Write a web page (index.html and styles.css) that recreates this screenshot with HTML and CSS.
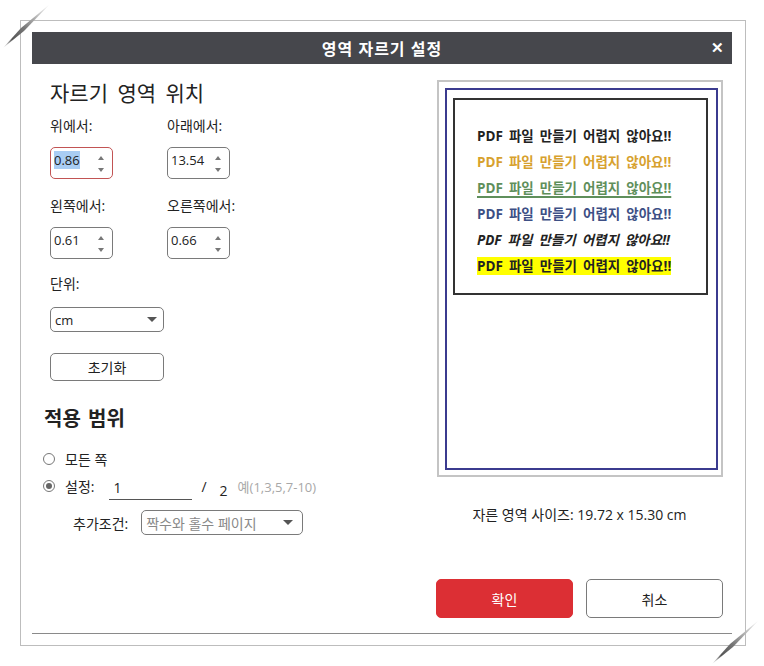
FILE: index.html
```html
<!DOCTYPE html>
<html lang="ko">
<head>
    <meta charset="UTF-8">
    <meta name="viewport" content="width=device-width, initial-scale=1.0">
    <title>영역 자르기 설정</title>
    <link rel="stylesheet" href="styles.css">
</head>
<body>

    <!-- 대화상자 바깥 틀 -->
    <div class="frame">
        <div class="dialog">
            <div class="titlebar">
                <span class="title">영역 자르기 설정</span>
                <span class="close">&#x2715;</span>
            </div>

            <div class="content">
                <!-- 왼쪽: 설정 -->
                <div class="left">
                    <h2 class="heading">자르기 영역 위치</h2>

                    <div class="fields">
                        <div class="field">
                            <div class="label">위에서:</div>
                            <div class="spin active"><span class="value"><span class="selected">0.86</span></span><span class="arrows"><i class="up"></i><i class="down"></i></span></div>
                        </div>
                        <div class="field">
                            <div class="label">아래에서:</div>
                            <div class="spin"><span class="value">13.54</span><span class="arrows"><i class="up"></i><i class="down"></i></span></div>
                        </div>
                        <div class="field">
                            <div class="label">왼쪽에서:</div>
                            <div class="spin"><span class="value">0.61</span><span class="arrows"><i class="up"></i><i class="down"></i></span></div>
                        </div>
                        <div class="field">
                            <div class="label">오른쪽에서:</div>
                            <div class="spin"><span class="value">0.66</span><span class="arrows"><i class="up"></i><i class="down"></i></span></div>
                        </div>
                    </div>

                    <div class="label unit-label">단위:</div>
                    <div class="select unit"><span>cm</span><i class="caret"></i></div>

                    <button class="reset">초기화</button>

                    <h2 class="heading bold">적용 범위</h2>

                    <div class="radio-row">
                        <span class="radio"></span>
                        <span>모든 쪽</span>
                    </div>
                    <div class="radio-row">
                        <span class="radio checked"></span>
                        <span>설정:</span>
                        <span class="page-input">1</span>
                        <span class="slash">/</span>
                        <span class="total">2</span>
                        <span class="hint">예(1,3,5,7-10)</span>
                    </div>
                    <div class="cond-row">
                        <span>추가조건:</span>
                        <div class="select cond"><span>짝수와 홀수 페이지</span><i class="caret"></i></div>
                    </div>
                </div>

                <!-- 오른쪽: 미리보기 -->
                <div class="right">
                    <div class="preview">
                        <div class="page">
                            <div class="crop">
                                <p class="line black">PDF 파일 만들기 어렵지 않아요!!</p>
                                <p class="line gold">PDF 파일 만들기 어렵지 않아요!!</p>
                                <p class="line green">PDF 파일 만들기 어렵지 않아요!!</p>
                                <p class="line blue">PDF 파일 만들기 어렵지 않아요!!</p>
                                <p class="line italic">PDF 파일 만들기 어렵지 않아요!!</p>
                                <p class="line"><span class="mark">PDF 파일 만들기 어렵지 않아요!!</span></p>
                            </div>
                        </div>
                    </div>

                    <div class="size">자른 영역 사이즈: 19.72 x 15.30 cm</div>

                    <div class="buttons">
                        <button class="btn ok">확인</button>
                        <button class="btn cancel">취소</button>
                    </div>
                </div>
            </div>

            <div class="footer-line"></div>
        </div>
    </div>

    <!-- 모서리 장식 -->
    <svg class="curl curl-tl" width="60" height="60" viewBox="0 0 60 60">
        <defs>
            <linearGradient id="g1" x1="50" y1="4" x2="3" y2="48" gradientUnits="userSpaceOnUse">
                <stop offset="0" stop-color="#fff"/>
                <stop offset="0.55" stop-color="#777"/>
                <stop offset="0.8" stop-color="#555"/>
                <stop offset="1" stop-color="#fff"/>
            </linearGradient>
        </defs>
        <polygon points="50,4 24,31 3,48 21,28" fill="url(#g1)"/>
    </svg>
    <svg class="curl curl-br" width="60" height="60" viewBox="0 0 60 60">
        <defs>
            <linearGradient id="g2" x1="57" y1="8" x2="10" y2="52" gradientUnits="userSpaceOnUse">
                <stop offset="0" stop-color="#fff"/>
                <stop offset="0.55" stop-color="#777"/>
                <stop offset="0.8" stop-color="#555"/>
                <stop offset="1" stop-color="#fff"/>
            </linearGradient>
        </defs>
        <polygon points="57,8 31,35 10,52 28,32" fill="url(#g2)"/>
    </svg>

</body>
</html>
```

FILE: styles.css
```css
body {
    margin: 0;
    background-color: #fff;
    font-family: "Open Sans", "Noto Sans CJK KR", sans-serif;
    font-size: 14px;
    color: #222;
}

/* 바깥 틀 */
.frame {
    margin: 20px 0 0 20px;
    width: 702px;
    padding: 11px;
    border: 1px solid #bdbdbd;
}

.dialog {
    width: 700px;
    display: flex;
    flex-direction: column;
}

.titlebar {
    height: 32px;
    background-color: #46474c;
    color: #fff;
    display: flex;
    align-items: center;
    justify-content: center;
    position: relative;
}

.title {
    font-size: 16px;
    font-weight: 700;
    letter-spacing: 1px;
}

.close {
    position: absolute;
    right: 8px;
    top: 5px;
    font-size: 15px;
    font-weight: 700;
}

.content {
    height: 569px;
    display: flex;
    justify-content: space-between;
}

/* 왼쪽 */
.left {
    padding: 15px 0 0 18px;
    width: 330px;
}

.heading {
    margin: 0;
    font-size: 21px;
    font-weight: 400;
    line-height: 28px;
    word-spacing: 4px;
    color: #222;
}

.heading.bold {
    font-weight: 700;
    font-size: 20px;
    margin: 24px 0 0 -6px;
    word-spacing: 2px;
}

.label {
    line-height: 18px;
}

.fields {
    display: grid;
    grid-template-columns: 117px 117px;
    row-gap: 18px;
    margin-top: 10px;
}

.field .label {
    margin-bottom: 12px;
}

.spin {
    width: 63px;
    height: 32px;
    box-sizing: border-box;
    border: 1px solid #7a7a7a;
    border-radius: 5px;
    display: flex;
    justify-content: space-between;
    padding: 3px 0 0 3px;
    font-size: 13px;
}

.spin.active {
    border-color: #c25454;
}

.value {
    line-height: 18px;
}

.selected {
    background-color: #a9cdf3;
}

.arrows {
    width: 22px;
    display: flex;
    flex-direction: column;
    align-items: center;
    padding-top: 5px;
    gap: 8px;
}

.arrows i {
    width: 0;
    height: 0;
    border-left: 3px solid transparent;
    border-right: 3px solid transparent;
}

.arrows .up {
    border-bottom: 4px solid #777;
}

.arrows .down {
    border-top: 4px solid #777;
}

.unit-label {
    margin-top: 16px;
}

.select {
    box-sizing: border-box;
    height: 25px;
    border: 1px solid #7a7a7a;
    border-radius: 5px;
    display: flex;
    align-items: center;
    justify-content: space-between;
    padding: 0 6px 0 4px;
}

.caret {
    width: 0;
    height: 0;
    border-left: 5px solid transparent;
    border-right: 5px solid transparent;
    border-top: 5px solid #555;
}

.unit {
    width: 114px;
    margin-top: 14px;
    font-size: 13px;
}

.reset {
    display: block;
    margin-top: 21px;
    width: 114px;
    height: 28px;
    background-color: #fff;
    border: 1px solid #7a7a7a;
    border-radius: 5px;
    font-family: inherit;
    font-size: 14px;
    color: #222;
}

.radio-row {
    display: flex;
    align-items: center;
    gap: 9px;
    height: 22px;
    margin-left: -7px;
    margin-top: 5px;
}

.heading.bold + .radio-row {
    margin-top: 15px;
}

.radio {
    width: 10px;
    height: 10px;
    border: 1px solid #777;
    border-radius: 50%;
    margin-right: 1px;
    position: relative;
}

.radio.checked::after {
    content: "";
    position: absolute;
    left: 2px;
    top: 2px;
    width: 6px;
    height: 6px;
    border-radius: 50%;
    background-color: #666;
}

.page-input {
    width: 79px;
    margin-left: 6px;
    padding-left: 4px;
    border-bottom: 1px solid #555;
    line-height: 22px;
    position: relative;
    top: 2px;
}

.total {
    position: relative;
    top: 4px;
    margin-left: 4px;
}

.hint {
    color: #a8a8a8;
    font-size: 13px;
    margin-left: 1px;
}

.cond-row {
    display: flex;
    align-items: center;
    gap: 13px;
    margin: 13px 0 0 23px;
}

.cond {
    width: 162px;
    color: #888;
    padding-right: 9px;
}

/* 오른쪽 */
.right {
    width: 287px;
    margin-right: 9px;
    padding-top: 16px;
}

.preview {
    box-sizing: border-box;
    width: 286px;
    height: 397px;
    margin-left: 1px;
    border: 2px solid #c4c4c4;
    padding: 6px 3px 5px 6px;
}

.page {
    height: 100%;
    box-sizing: border-box;
    border: 2px solid #3b3b8f;
    padding: 8px 0 0 6px;
}

.crop {
    box-sizing: border-box;
    width: 255px;
    height: 197px;
    border: 2px solid #333;
    padding: 23px 0 0 22px;
}

.line {
    margin: 0;
    font-weight: 700;
    font-size: 13.5px;
    line-height: 26px;
    word-spacing: 2.5px;
    white-space: nowrap;
    color: #222;
}

.gold {
    color: #d7a12e;
}

.green {
    color: #5f8f5b;
    text-decoration: underline;
    text-decoration-thickness: 2px;
    text-underline-offset: 3px;
}

.blue {
    color: #3d4f85;
}

.italic {
    font-style: italic;
}

.mark {
    background-color: #ffff00;
}

.size {
    text-align: center;
    line-height: 18px;
    margin-top: 29px;
}

.buttons {
    display: flex;
    justify-content: space-between;
    margin-top: 55px;
}

.btn {
    width: 137px;
    height: 39px;
    border-radius: 5px;
    font-family: inherit;
    font-size: 14px;
}

.ok {
    background-color: #dc2f34;
    border: 1px solid #dc2f34;
    color: #fff;
}

.cancel {
    background-color: #fff;
    border: 1px solid #7a7a7a;
    color: #222;
}

.footer-line {
    height: 1px;
    background-color: #8a8a8a;
}

/* 모서리 장식 */
.curl {
    position: absolute;
}

.curl-tl {
    left: 0;
    top: 0;
}

.curl-br {
    left: 702px;
    top: 612px;
}
```
